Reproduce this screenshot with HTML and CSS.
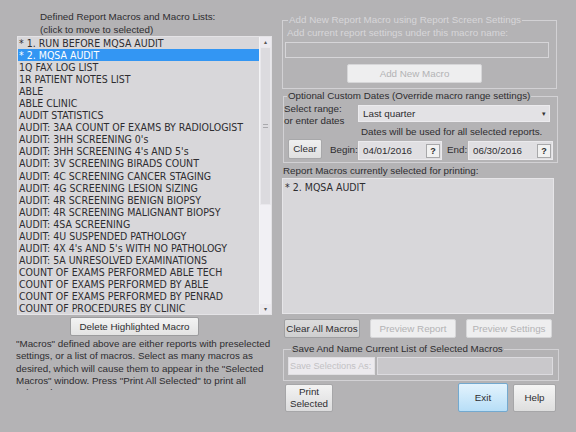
FILE: index.html
```html
<!DOCTYPE html>
<html>
<head>
<meta charset="utf-8">
<link rel="stylesheet" href="styles.css">
</head>
<body>
<div class="window">
  <div class="left">
    <div class="list-title">Defined Report Macros and Macro Lists:<br>(click to move to selected)</div>
    <div class="listbox">
      <ul class="items">
        <li>* 1. RUN BEFORE MQSA AUDIT</li>
        <li class="sel">* 2. MQSA AUDIT</li>
        <li>1Q FAX LOG LIST</li>
        <li>1R PATIENT NOTES LIST</li>
        <li>ABLE</li>
        <li>ABLE CLINIC</li>
        <li>AUDIT STATISTICS</li>
        <li>AUDIT: 3AA COUNT OF EXAMS BY RADIOLOGIST</li>
        <li>AUDIT: 3HH SCREENING 0's</li>
        <li>AUDIT: 3HH SCREENING 4's AND 5's</li>
        <li>AUDIT: 3V SCREENING BIRADS COUNT</li>
        <li>AUDIT: 4C SCREENING CANCER STAGING</li>
        <li>AUDIT: 4G SCREENING LESION SIZING</li>
        <li>AUDIT: 4R SCREENING BENIGN BIOPSY</li>
        <li>AUDIT: 4R SCREENING MALIGNANT BIOPSY</li>
        <li>AUDIT: 4SA SCREENING</li>
        <li>AUDIT: 4U SUSPENDED PATHOLOGY</li>
        <li>AUDIT: 4X 4's AND 5's WITH NO PATHOLOGY</li>
        <li>AUDIT: 5A UNRESOLVED EXAMINATIONS</li>
        <li>COUNT OF EXAMS PERFORMED ABLE TECH</li>
        <li>COUNT OF EXAMS PERFORMED BY ABLE</li>
        <li>COUNT OF EXAMS PERFORMED BY PENRAD</li>
        <li>COUNT OF PROCEDURES BY CLINIC</li>
      </ul>
      <div class="scrollbar">
        <span class="arrow">&#9652;</span>
        <div class="thumb"><span class="grip"></span></div>
        <div class="track"></div>
        <span class="arrow">&#9662;</span>
      </div>
    </div>
    <button class="btn delete">Delete Highlighted Macro</button>
    <p class="note">"Macros" defined above are either reports with preselected settings, or a list of macros. Select as many macros as desired, which will cause them to appear in the "Selected Macros" window. Press "Print All Selected" to print all selected macros.</p>
  </div>

  <div class="right">
    <fieldset class="group add disabled">
      <legend>Add New Report Macro using Report Screen Settings</legend>
      <div class="add-label">Add current report settings under this macro name:</div>
      <div class="field name-field"></div>
      <button class="btn dis add-btn">Add New Macro</button>
    </fieldset>

    <fieldset class="group dates">
      <legend>Optional Custom Dates (Override macro range settings)</legend>
      <div class="range-row">
        <div class="range-label">Select range:<br>or enter dates</div>
        <div class="range-main">
          <div class="select"><span>Last quarter</span><span class="caret">&#9662;</span></div>
          <div class="dates-note">Dates will be used for all selected reports.</div>
        </div>
      </div>
      <div class="date-row">
        <button class="btn clear">Clear</button>
        <span class="date-label begin">Begin:</span>
        <div class="date-input begin-in"><span>04/01/2016</span><span class="q">?</span></div>
        <span class="date-label end">End:</span>
        <div class="date-input end-in"><span>06/30/2016</span><span class="q">?</span></div>
      </div>
    </fieldset>

    <div class="sel-title">Report Macros currently selected for printing:</div>
    <div class="sel-list">* 2. MQSA AUDIT</div>

    <div class="btn-row">
      <button class="btn clear-all">Clear All Macros</button>
      <button class="btn dis preview">Preview Report</button>
      <button class="btn dis preview">Preview Settings</button>
    </div>

    <fieldset class="group save">
      <legend>Save And Name Current List of Selected Macros</legend>
      <div class="save-row">
        <div class="save-label">Save Selections As:</div>
        <div class="save-input"></div>
      </div>
    </fieldset>

    <div class="bottom-row">
      <button class="btn print">Print<br>Selected</button>
      <button class="btn exit">Exit</button>
      <button class="btn help">Help</button>
    </div>
  </div>
</div>
</body>
</html>
```
FILE: styles.css
```css
* { box-sizing: border-box; }
body {
  margin: 0;
  background: #b4b3b5;
  font-family: "Liberation Sans", Arial, sans-serif;
  font-size: 9.8px;
  color: #2e2d30;
}
.window {
  display: grid;
  grid-template-columns: 282px 294px;
  width: 576px;
  height: 432px;
  overflow: hidden;
}
button { font: inherit; color: inherit; padding: 0; }

/* left column */
.left { padding: 11px 0 0 17px; display: flex; flex-direction: column; }
.list-title { margin-left: 23px; line-height: 12.6px; height: 25px; }
.listbox {
  width: 255px; height: 279px;
  display: flex;
  border: 1px solid #e4e3e6;
  background: #d8d7da;
}
.items {
  list-style: none; margin: 0; padding: 0; flex: 1;
  font-family: "DejaVu Sans Condensed", "DejaVu Sans", sans-serif;
  font-stretch: condensed;
  font-size: 10.5px;
  line-height: 12.05px; overflow: hidden;
}
.items li { padding-left: 1px; white-space: nowrap; }
.items li.sel { background: #3396f3; color: #fff; }
.scrollbar {
  width: 12px; display: flex; flex-direction: column; align-items: stretch;
  background: #eceaef; border-left: 1px solid #f4f4f6;
}
.arrow { height: 10px; font-size: 6px; line-height: 10px; text-align: center; color: #555; }
.thumb {
  height: 158px; background: #dcdbdf; border: 1px solid #e9e8ec;
  display: flex; align-items: center; justify-content: center;
}
.grip { width: 5px; height: 4px; border-top: 1px solid #a9a9ad; border-bottom: 1px solid #a9a9ad; }
.track { flex: 1; background: #f1f0f4; }

.btn {
  border: 1px solid #9c9c9e;
  border-radius: 2px;
  background: linear-gradient(#f3f3f3, #e3e3e3);
  text-align: center;
  line-height: 1;
  white-space: nowrap;
}
.btn.dis { background: #eeeeef; border-color: #d6d6d8; color: #b3b3b5; }
.delete { margin: 2px 0 0 53px; width: 129px; height: 19px; }
.note {
  margin: 2px 0 0 -1px; width: 262px; height: 52px; overflow: hidden;
  line-height: 12.3px;
}

/* right column */
.right { padding-top: 14px; display: flex; flex-direction: column; }
.group {
  margin: 0; padding: 0 1px 0 1px; min-width: 0;
  border: 1px solid #d2d1d4;
}
.group legend {
  padding: 0 1px; margin-left: 3px; line-height: 12px; white-space: nowrap;
}
.disabled { color: #d7d6d9; }
.add { width: 275px; height: 75px; padding-left: 2px; }
.add-label { margin: 1px 0 0 2px; line-height: 12px; white-space: nowrap; }
.name-field { margin-top: 3px; width: 264px; height: 16px; border: 1px solid #d6d5d8; }
.add-btn { margin: 6px 0 0 62px; width: 135px; height: 19px; }

.dates { margin-top: 1px; width: 275px; height: 73px; padding: 0; margin-left: 1px; }
.range-row { display: flex; margin-top: 1px; }
.range-label { width: 74px; line-height: 12px; white-space: nowrap; }
.range-main { display: flex; flex-direction: column; }
.select {
  margin-top: 2px; width: 192px; height: 17px;
  background: #e3e2e5; border: 1px solid #ecebee;
  display: flex; align-items: center; justify-content: space-between;
  padding: 0 3px 0 4px;
}
.caret { font-size: 7px; color: #333; }
.dates-note { margin: 4px 0 0 3px; line-height: 12px; white-space: nowrap; }
.date-row { display: flex; align-items: center; margin-top: 0; }
.clear { margin-left: 4px; width: 34px; height: 20px; background: linear-gradient(#efefef, #e0e0e0); border-color: #a8a8aa; }
.date-label { white-space: nowrap; }
.date-label.begin { margin-left: 8px; width: 28px; }
.date-label.end { margin-left: 5px; width: 21px; }
.date-input {
  height: 19px; margin-top: 3px;
  background: #e0dfe2; border: 1px solid #ebeaed;
  display: flex; align-items: center; justify-content: space-between;
  padding: 0 1px 0 4px;
}
.begin-in { width: 84px; }
.end-in { width: 85px; }
.q {
  width: 14px; height: 14px; border: 1px solid #a8a8aa; background: #f1f1f1;
  font-size: 9px; font-weight: bold; text-align: center; line-height: 12px;
}

.sel-title { margin: 2px 0 0 1px; line-height: 12px; white-space: nowrap; }
.sel-list {
  margin-top: 1px; width: 272px; height: 136px;
  background: #d8d7da; border: 1px solid #e6e5e8;
  padding: 2px 0 0 2px; line-height: 12px;
  font-family: "DejaVu Sans Condensed", "DejaVu Sans", sans-serif;
  font-stretch: condensed;
  font-size: 10.5px;
}
.btn-row { display: flex; gap: 10px; margin: 5px 0 0 2px; }
.clear-all { width: 76px; height: 19px; background: linear-gradient(#dcdcdc, #cfcfd0); border-color: #a0a0a2; }
.preview { width: 86px; height: 19px; }

.save { margin: 5px 0 0 1px; width: 276px; height: 38px; padding: 0 4px; }
.save-row { display: flex; gap: 2px; margin-top: 2px; }
.save-label {
  width: 87px; height: 18px; background: #eceaee; border: 1px solid #e0dfe2;
  color: #c2c1c4; line-height: 16px; padding-left: 1px; white-space: nowrap;
  font-size: 9.2px; overflow: hidden;
}
.save-input { width: 176px; height: 18px; background: #c9c8cb; border: 1px solid #dcdbdf; }

.bottom-row { display: flex; align-items: flex-start; margin: 3px 0 0 3px; }
.print { width: 48px; height: 28px; line-height: 12px; background: linear-gradient(#f3f3f3, #dcdcdd); border-color: #a6a6a8; }
.exit {
  margin: -1px 0 0 125px; width: 50px; height: 29px;
  background: linear-gradient(#e3f3fd, #b7def7);
  border-color: #73a9cf;
}
.help { margin-left: 5px; width: 43px; height: 28px; background: linear-gradient(#f5f5f5, #dedede); border-color: #a6a6a8; }
```
